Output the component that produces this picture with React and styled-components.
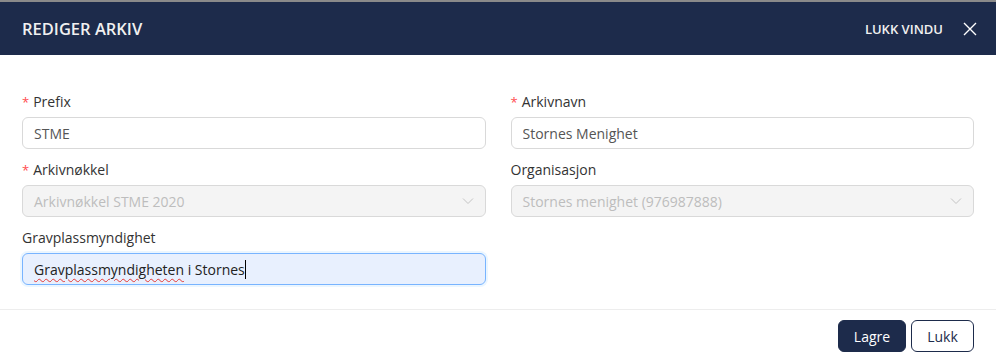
import React from "react";
import styled, { createGlobalStyle } from "styled-components";

const GlobalStyle = createGlobalStyle`
  body {
    margin: 0;
    background: #fff;
    font-family: "Open Sans", "Noto Sans", sans-serif;
  }
  * { box-sizing: border-box; }
`;

const Modal = () => {
  return (
    <Wrapper>
      <GlobalStyle />
      <Header>
        <Title>REDIGER ARKIV</Title>
        <CloseArea>
          <CloseText>LUKK VINDU</CloseText>
          <svg width="14" height="14" viewBox="0 0 14 14">
            <path d="M1 1 L13 13 M13 1 L1 13" stroke="#fff" strokeWidth="1.4" fill="none" />
          </svg>
        </CloseArea>
      </Header>

      <Body>
        <Field>
          <Label required>Prefix</Label>
          <Input defaultValue="STME" readOnly />
        </Field>
        <Field>
          <Label required>Arkivnavn</Label>
          <Input defaultValue="Stornes Menighet" readOnly />
        </Field>
        <Field>
          <Label required>Arkivnøkkel</Label>
          <Select>
            <span>Arkivnøkkel STME 2020</span>
            <Chevron />
          </Select>
        </Field>
        <Field>
          <Label>Organisasjon</Label>
          <Select>
            <span>Stornes menighet (976987888)</span>
            <Chevron />
          </Select>
        </Field>
        <Field>
          <Label>Gravplassmyndighet</Label>
          <FocusedInput>
            <Misspelled>Gravplassmyndigheten</Misspelled>&nbsp;i Stornes
            <Caret />
          </FocusedInput>
        </Field>
      </Body>

      <Footer>
        <Button primary>Lagre</Button>
        <Button>Lukk</Button>
      </Footer>
    </Wrapper>
  );
};

const Chevron = () => (
  <svg width="12" height="8" viewBox="0 0 12 8">
    <path d="M1 1.5 L6 6.5 L11 1.5" stroke="#c4c4c4" strokeWidth="1" fill="none" />
  </svg>
);

const Wrapper = styled.div`
  width: 996px;
  height: 361px;
  display: flex;
  flex-direction: column;
  background: #fff;
`;

const Header = styled.div`
  height: 55px;
  border-top: 2px solid #8a8a8a;
  background: #1d2b4b;
  display: flex;
  align-items: center;
  justify-content: space-between;
  padding: 0 19px 0 22px;
`;

const Title = styled.h1`
  margin: 0;
  font-size: 16.5px;
  font-weight: 600;
  color: #f0f0f0;
`;

const CloseArea = styled.div`
  display: flex;
  align-items: center;
  gap: 20px;
`;

const CloseText = styled.span`
  font-size: 13px;
  font-weight: 600;
  color: #f0f0f0;
`;

const Body = styled.div`
  display: grid;
  grid-template-columns: 1fr 1fr;
  column-gap: 25px;
  row-gap: 10px;
  padding: 36px 22px 24px;
  border-bottom: 1px solid #ededed;
`;

const Field = styled.div`
  display: flex;
  flex-direction: column;
  gap: 4px;
`;

const Label = styled.label`
  font-size: 14px;
  line-height: 22px;
  color: #333;
  &::before {
    content: ${(p) => (p.required ? '"*"' : "none")};
    color: #ff4d4f;
    font-size: 13px;
    margin-right: 4px;
  }
`;

const Input = styled.input`
  height: 32px;
  padding: 0 11px;
  border: 1px solid #d9d9d9;
  border-radius: 6px;
  font-family: inherit;
  font-size: 14px;
  color: #555;
  outline: none;
  background: #fff;
`;

const Select = styled.div`
  height: 32px;
  padding: 0 11px;
  border: 1px solid #d9d9d9;
  border-radius: 6px;
  background: #f4f4f4;
  font-size: 14px;
  color: #bdbdbd;
  display: flex;
  align-items: center;
  justify-content: space-between;
`;

const FocusedInput = styled.div`
  height: 32px;
  padding: 0 11px;
  border: 1px solid #78b4ff;
  border-radius: 6px;
  background: #e8f0fe;
  box-shadow: 0 0 0 2px rgba(5, 145, 255, 0.08);
  font-size: 14px;
  color: #222;
  display: flex;
  align-items: center;
  white-space: pre;
`;

const Misspelled = styled.span`
  text-decoration: underline wavy #e53935;
  text-decoration-thickness: 1px;
  text-underline-offset: 3px;
`;

const Caret = styled.span`
  display: inline-block;
  width: 1px;
  height: 19px;
  background: #000;
`;

const Footer = styled.div`
  display: flex;
  justify-content: flex-end;
  gap: 5px;
  padding: 10px 22px 0;
`;

const Button = styled.button`
  height: 32px;
  padding: 0 14px;
  border-radius: 6px;
  font-family: inherit;
  font-size: 14px;
  border: 1px solid #1d2b4b;
  background: ${(p) => (p.primary ? "#1d2b4b" : "#fff")};
  color: ${(p) => (p.primary ? "#fff" : "#1d2b4b")};
  min-width: ${(p) => (p.primary ? "68px" : "63px")};
  cursor: pointer;
`;

export default Modal;
